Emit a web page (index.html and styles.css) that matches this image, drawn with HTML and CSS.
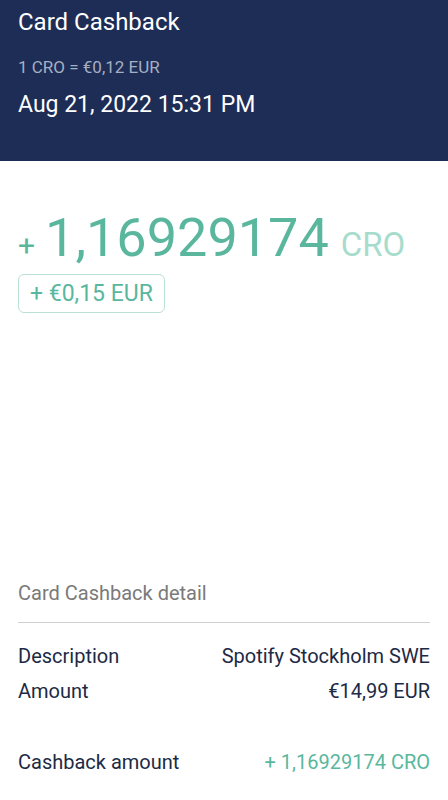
FILE: index.html
```html
<!DOCTYPE html>
<html>
<head>
<meta charset="utf-8">
<link rel="stylesheet" href="styles.css">
</head>
<body>
<header class="header">
  <h1 class="title">Card Cashback</h1>
  <div class="rate">1 CRO = €0,12 EUR</div>
  <div class="date">Aug 21, 2022 15:31 PM</div>
</header>
<main class="content">
  <section class="amount-block">
    <div class="amount">
      <span class="plus">+</span>
      <span class="value">1,16929174</span>
      <span class="unit">CRO</span>
    </div>
    <div class="fiat">+ €0,15 EUR</div>
  </section>
  <section class="detail">
    <div class="detail-title">Card Cashback detail</div>
    <div class="rows">
      <div class="row"><span>Description</span><span>Spotify Stockholm SWE</span></div>
      <div class="row"><span>Amount</span><span>€14,99 EUR</span></div>
    </div>
    <div class="row cashback"><span>Cashback amount</span><span class="green">+ 1,16929174 CRO</span></div>
  </section>
</main>
</body>
</html>
```
FILE: styles.css
```css
* { box-sizing: border-box; margin: 0; padding: 0; }
html, body { width: 448px; height: 800px; overflow: hidden; background: #fff; }
body { font-family: Roboto, "Noto Sans", sans-serif; color: #1d2a45; }
.header {
  background: #1d2d56;
  height: 161px;
  padding: 6px 18px 0;
  color: #fff;
}
.title { font-size: 24px; font-weight: 400; line-height: 32px; }
.rate { margin-top: 19px; font-size: 17px; line-height: 20px; color: #a6afc2; }
.date { margin-top: 14px; font-size: 23px; line-height: 28px; }
.content { padding: 0 18px; }
.amount-block { padding-top: 45px; height: 419px; }
.amount { display: flex; align-items: baseline; color: #5ab79e; white-space: nowrap; height: 66px; }
.plus { font-size: 30px; margin-right: 10px; }
.value { font-size: 54px; line-height: 64px; }
.unit { font-size: 33px; color: #a7dccd; margin-left: 12px; }
.fiat {
  display: inline-block;
  margin-top: 2px;
  border: 1px solid #b9e1d6;
  border-radius: 6px;
  padding: 0 11px;
  height: 39px;
  line-height: 37px;
  font-size: 23px;
  color: #5ab79e;
}
.detail-title { font-size: 20px; line-height: 26px; color: #7a7a7a; padding-bottom: 16px; border-bottom: 1px solid #cfcfcf; }
.rows { padding-top: 20px; display: flex; flex-direction: column; gap: 9px; }
.row { display: flex; justify-content: space-between; font-size: 20px; line-height: 26px; }
.cashback { margin-top: 45px; }
.green { color: #5ab79e; }
```
